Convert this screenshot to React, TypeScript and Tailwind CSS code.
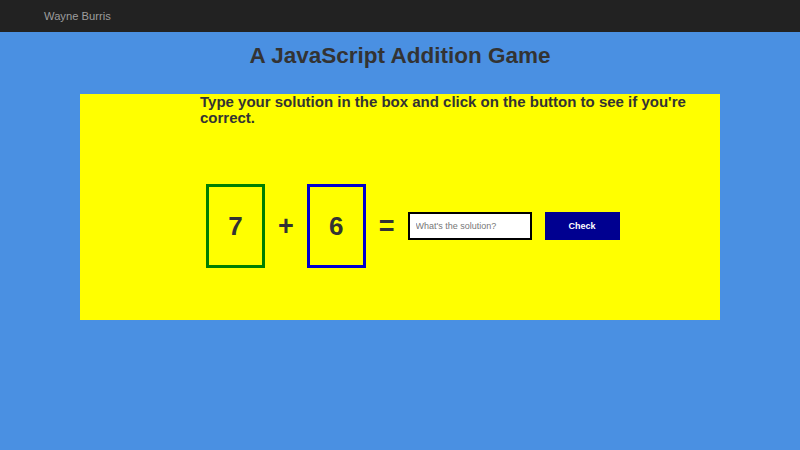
import React from "react";

export default function App() {
  return (
    <div className="min-h-[450px] bg-[#4a90e2]" style={{ fontFamily: '"Liberation Sans", Arial, sans-serif' }}>
      <nav className="h-[32px] bg-[#222222] flex items-center pl-[44px]">
        <span className="text-[11.2px] text-[#9d9d9d]">Wayne Burris</span>
      </nav>
      <h1 className="text-center text-[22.5px] font-bold text-[#333333] leading-[28px] pt-[10px]">
        A JavaScript Addition Game
      </h1>
      <div className="mx-auto mt-[24px] w-[640px] h-[226px] bg-[#ffff00] pl-[120px]">
        <h2 className="text-[15px] font-bold text-[#333333] leading-[16px]">
          Type your solution in the box and click on the button to see if you're correct.
        </h2>
        <div className="mt-[58px] pl-[6px] flex items-center gap-[13px] text-[#333333]">
          <div className="w-[59px] h-[84px] border-[3px] border-[#008000] flex items-center justify-center text-[26px] font-bold">
            7
          </div>
          <span className="text-[27px] font-bold">+</span>
          <div className="w-[59px] h-[84px] border-[3px] border-[#0000cc] flex items-center justify-center text-[26px] font-bold">
            6
          </div>
          <span className="text-[27px] font-bold">=</span>
          <input
            className="w-[124px] h-[28px] border-2 border-black bg-white px-[6px] text-[9px] outline-none placeholder:text-[#777777]"
            placeholder="What's the solution?"
          />
          <button className="w-[75px] h-[28px] pt-[2px] bg-[#000090] text-white text-[9px] font-bold">Check</button>
        </div>
      </div>
    </div>
  );
}
